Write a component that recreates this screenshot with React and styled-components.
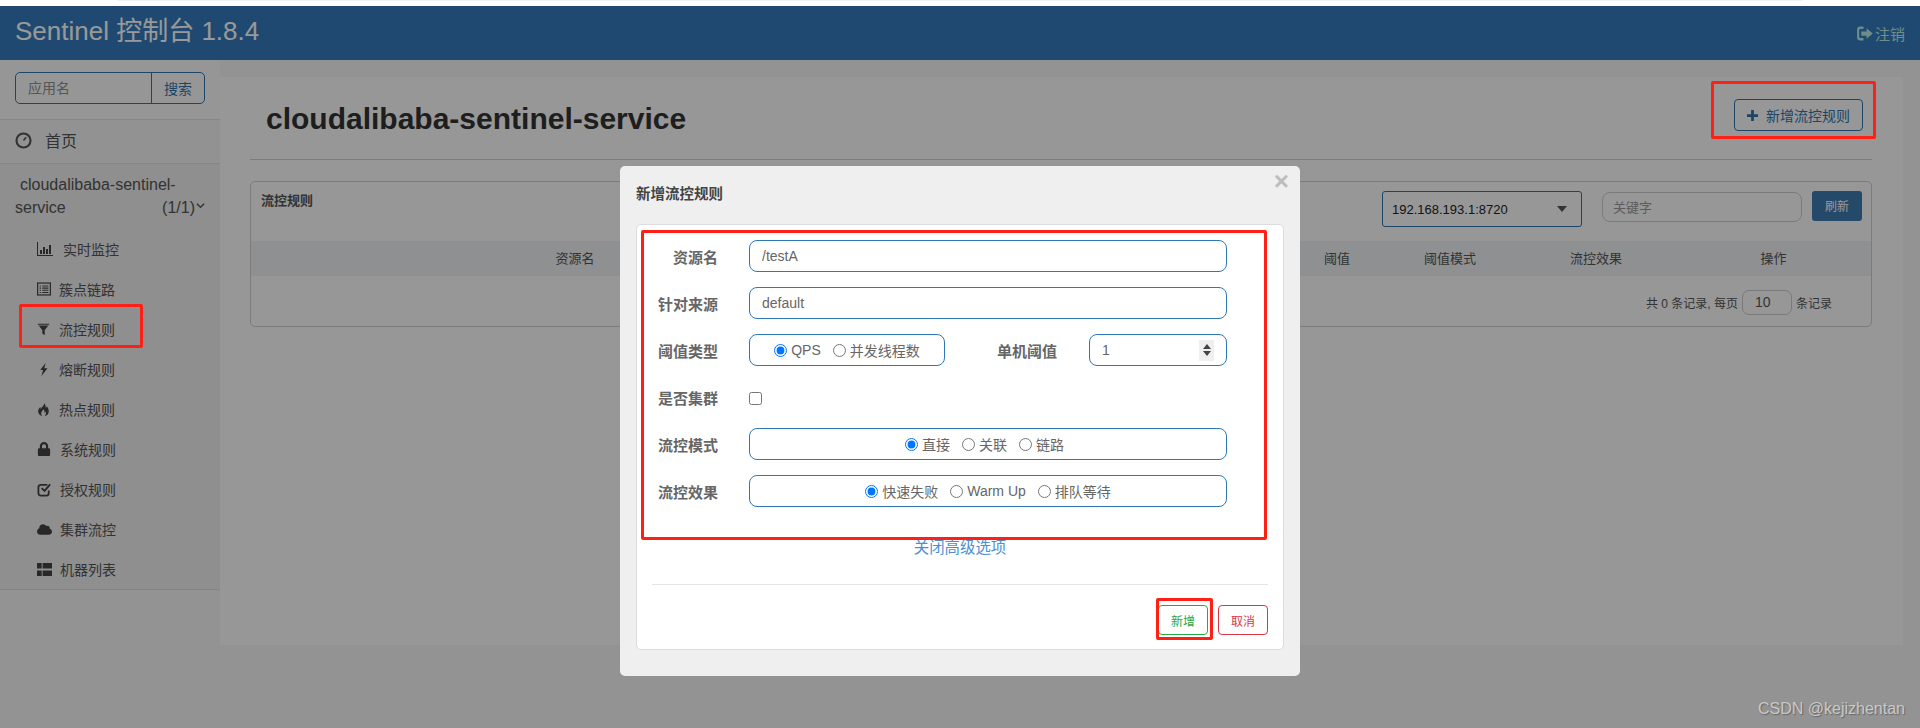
import React from 'react';
import styled, { createGlobalStyle } from 'styled-components';
import { FaBolt, FaLock, FaCloud } from 'react-icons/fa';

const Global = createGlobalStyle`
  html, body { margin: 0; padding: 0; background: #fff; }
  body { font-family: "Liberation Sans", Arial, "Noto Sans CJK SC", sans-serif; font-size: 14px; color: #333; }
  * { box-sizing: border-box; }
  input { font-family: inherit; }
`;

const Strip = styled.div`height: 6px; background: #fff; padding: 0 118px;`;
const StripLine = styled.div`height: 1px; background: #f1f1f1;`;
const Frame = styled.div`position: relative; height: 722px; overflow: hidden; background: #f5f5f5; display: flex; flex-direction: column;`;
const Navbar = styled.header`height: 54px; flex: none; background: #347bbb; display: flex; align-items: center; justify-content: space-between; padding: 0 15px;`;
const Brand = styled.div`font-size: 26px; color: #fff; line-height: 50px; margin-bottom: 4px;`;
const Logout = styled.div`display: flex; align-items: center; gap: 2px; font-size: 15px; color: #b8eae6; svg { width: 17px; height: 17px; }`;
const Body = styled.div`flex: 1; display: flex; align-items: flex-start; min-height: 0;`;

const Sidebar = styled.aside`width: 220px; flex: none; background: #fafafa;`;
const SearchWrap = styled.div`padding: 12px 15px 15px; border-bottom: 1px solid #e2e2e2; background: #fbfbfb;`;
const SearchGroup = styled.div`height: 32px; display: flex; border: 1px solid #2f74ac; border-radius: 5px; overflow: hidden; background: #fbfbfb;`;
const SearchInput = styled.input`flex: 1; min-width: 0; height: 100%; border: 0; outline: 0; background: transparent; padding: 0 12px; font-size: 14px; &::placeholder { color: #8f8f8f; opacity: 1; }`;
const SearchBtn = styled.div`width: 53px; flex: none; border-left: 1px solid #2f74ac; display: flex; align-items: center; justify-content: center; color: #2f74ac; font-size: 14px;`;
const HomeRow = styled.div`height: 44px; display: flex; align-items: center; gap: 13px; padding: 0 0 3px 15px; border-bottom: 1px solid #dedede; background: #f3f3f3; font-size: 16px; color: #555; svg { width: 17px; height: 17px; }`;
const Project = styled.div`background: #eeeeee; border-bottom: 1px solid #dcdcdc; padding-top: 9px;`;
const ProjectName = styled.div`font-size: 16px; line-height: 23px; color: #555; padding: 0 15px 0 15px; `;
const ProjectFirst = styled.div`padding-left: 5px;`;
const ProjectSecond = styled.div`display: flex; justify-content: space-between; align-items: center;`;
const ProjectCount = styled.span`display: inline-flex; align-items: center; gap: 1px; svg { width: 9px; height: 9px; margin-bottom: 5px; }`;
const Menu = styled.ul`list-style: none; margin: 0; padding: 10px 0 0;`;
const MenuItem = styled.li`height: 40px; display: flex; align-items: center; padding-left: 37px; color: #555; font-size: 14px; svg { width: ${p => p.$size || 14}px; height: ${p => p.$size || 14}px; flex: none; color: #444; }`;
const MenuText = styled.span`margin-left: ${p => p.$gap || 9}px;`;

const Main = styled.main`flex: 1; padding: 17px 17px 0 0; min-width: 0;`;
const Panel = styled.section`height: 568px; background: #fcfcfc; padding: 0 31px 0 30px;`;
const PageHead = styled.div`height: 83px; border-bottom: 1px solid #cfcfcf; display: flex; justify-content: space-between; align-items: flex-start; padding: 22px 9px 0 16px;`;
const PageTitle = styled.h1`margin: 0; font-size: 30px; line-height: 40px; font-weight: 700; color: #333;`;
const AddBtn = styled.div`width: 129px; height: 32px; border: 1px solid #2f74ac; border-radius: 4px; display: flex; align-items: center; justify-content: center; gap: 8px; color: #2f74ac; font-size: 14px; svg { width: 11px; height: 11px; }`;
const Card = styled.section`margin-top: 21px; border: 1px solid #cfcfcf; border-radius: 5px; height: 146px;`;
const CardHead = styled.div`height: 59px; display: flex; justify-content: space-between; align-items: flex-start; padding: 9px 9px 0 10px;`;
const CardTitle = styled.div`font-size: 13px; font-weight: 700; color: #555; line-height: 20px;`;
const Controls = styled.div`display: flex; align-items: flex-start;`;
const SelectBox = styled.div`width: 200px; height: 36px; border: 1px solid #2f74ac; border-radius: 3px; display: flex; align-items: center; justify-content: space-between; padding: 0 14px 0 9px; font-size: 13px; color: #222;`;
const Caret = styled.span`width: 0; height: 0; border-left: 5px solid transparent; border-right: 5px solid transparent; border-top: 6px solid #555;`;
const KeywordInput = styled.input`width: 200px; height: 30px; margin: 1px 10px 0 20px; border: 1px solid #cdcdcd; border-radius: 8px; outline: 0; background: transparent; padding: 0 10px; font-size: 13px; &::placeholder { color: #999; opacity: 1; }`;
const RefreshBtn = styled.div`width: 50px; height: 30px; background: #3d7ab0; border-radius: 3px; color: #fff; font-size: 12px; display: flex; align-items: center; justify-content: center; padding-bottom: 2px;`;
const TableHead = styled.div`height: 35px; background: #eef0f3; display: grid; grid-template-columns: 648px 391px 94px 132px 160px 1fr; align-items: center; font-size: 13px; color: #555; text-align: center; padding-bottom: 3px;`;
const Pager = styled.div`height: 49px; display: flex; align-items: center; justify-content: flex-end; padding: 3px 39px 0 0; font-size: 12px; color: #555;`;
const PagerInput = styled.input`width: 50px; height: 25px; margin: 0 4px 0 4px; border: 1px solid #ccc; border-radius: 7px; outline: 0; background: transparent; padding: 0 0 0 12px; font-size: 14px; color: #555;`;

const Backdrop = styled.div`position: absolute; inset: 0; background: rgba(0,0,0,.4);`;
const Modal = styled.div`position: absolute; left: 620px; top: 160px; width: 680px; height: 510px; background: #efefef; border-radius: 5px; padding: 0 16px;`;
const ModalHead = styled.div`height: 58px; display: flex; align-items: center; justify-content: space-between; padding: 0 1px 6px 0; position: relative;`;
const ModalTitle = styled.div`font-size: 14.5px; font-weight: 700; color: #444;`;
const Close = styled.div`position: absolute; right: -5px; top: 2px; font-size: 26px; font-weight: 700; color: #bdbdbd; line-height: 26px;`;
const ModalBody = styled.div`background: #fff; border: 1px solid #ddd; border-radius: 5px; height: 426px; padding-top: 15px;`;
const FormRow = styled.div`display: flex; align-items: center; height: 32px; margin-bottom: 15px;`;
const Label = styled.label`width: 81px; flex: none; margin-right: 31px; text-align: right; font-size: 15px; font-weight: 700; color: #666;`;
const InlineLabel = styled(Label)`width: 62px; margin-left: 50px; margin-right: 32px;`;
const TextBox = styled.input`width: 478px; height: 32px; border: 1px solid #2f78b8; border-radius: 8px; outline: 0; padding: 0 12px; font-size: 14px; color: #666; background: #fff;`;
const RadioBox = styled.div`width: ${p => p.$w || 478}px; height: 32px; border: 1px solid #2f78b8; border-radius: 8px; display: flex; align-items: center; justify-content: center; gap: 12px; padding-right: ${p => p.$shift || 0}px; font-size: 14px; color: #666;`;
const RadioLabel = styled.span`display: inline-flex; align-items: center; gap: 4px;`;
const Radio = styled.input.attrs({ type: 'radio' })`width: 13px; height: 13px; margin: 0;`;
const Check = styled.input.attrs({ type: 'checkbox' })`width: 13px; height: 13px; margin: 2px 0 0;`;
const NumberBox = styled.div`width: 138px; height: 32px; border: 1px solid #2f78b8; border-radius: 8px; display: flex; align-items: center; justify-content: space-between; padding: 0 12px; font-size: 14px; color: #666;`;
const Spinner = styled.span`width: 15px; height: 21px; background: #efefef; display: flex; flex-direction: column; align-items: center; justify-content: center; gap: 2px;`;
const SpinUp = styled.i`width: 0; height: 0; border-left: 4px solid transparent; border-right: 4px solid transparent; border-bottom: 5px solid #444;`;
const SpinDown = styled.i`width: 0; height: 0; border-left: 4px solid transparent; border-right: 4px solid transparent; border-top: 5px solid #444;`;
const AdvLink = styled.div`margin-top: 30px; height: 22px; line-height: 22px; text-align: center; font-size: 15.400px; color: #4b8fd3;`;
const Divider = styled.div`margin: 25px 15px 0; height: 1px; background: #e4e4e4;`;
const Footer = styled.div`display: flex; justify-content: flex-end; gap: 10px; padding: 20px 15px 0;`;
const FootBtn = styled.div`width: 50px; height: 30px; border: 1px solid ${p => p.$c}; color: ${p => p.$c}; border-radius: 4px; background: #fff; font-size: 12px; display: flex; align-items: center; justify-content: center;`;

const Mark = styled.div`position: absolute; left: ${p => p.$x}px; top: ${p => p.$y - 6}px; width: ${p => p.$w}px; height: ${p => p.$h}px; border: 3px solid #ff2015; border-radius: 2px; pointer-events: none;`;
const Watermark = styled.div`position: absolute; right: 15px; bottom: 10px; font-size: 16px; color: #c9c9c9; text-shadow: 1px 1px 1px #666;`;

const IconDash = () => (
  <svg viewBox="0 0 16 16" fill="none" stroke="currentColor"><circle cx="8" cy="8" r="6.6" strokeWidth="2" /><path d="M8 8 10.500 5M4.500 6h.01M8 4.200h.01M4.400 9h.01M11.600 9h.01" strokeWidth="1.500" /></svg>
);
const IconStats = () => (
  <svg viewBox="0 0 16 16" fill="currentColor"><path d="M0 1h1v13h15v1H0z" /><path d="M3 9h2v4H3zM6 6h2v7H6zM9 8h2v5H9zM12 4h2v9h-2z" /></svg>
);
const IconList = () => (
  <svg viewBox="0 0 16 16" fill="none" stroke="currentColor"><rect x=".7" y="1.200" width="14.600" height="13.600" strokeWidth="1.400" /><path d="M3 4.500h1.500M6 4.500h7M3 7h1.500M6 7h7M3 9.500h1.500M6 9.500h7M3 12h1.500M6 12h7" strokeWidth="1.200" /></svg>
);
const IconFilter = () => (
  <svg viewBox="0 0 16 16" fill="currentColor"><path d="M1 1h14v1H1zM2 3h12L9.500 8.500V15l-3-2V8.500z" /></svg>
);
const IconBolt = () => (
  <svg viewBox="0 0 12 16" fill="currentColor"><path d="M8.500 0 2 8.500h3.500L3.500 16 11 6.500H7z" /></svg>
);
const IconFire = () => (
  <svg viewBox="0 0 16 16" fill="currentColor"><path d="M8.500 0c1 3-2.500 4.500-4 7.500C4 6.500 4.500 5.500 4 5 2 7 1 9 1.500 11.500 2 14 4 15.500 6.500 16 5 14.500 4.500 12.500 6 10.500c.8-1 1.500-2 1.500-3 1.500 1.500 2 3 1.500 4.500.8-.3 1.300-1 1.500-2 .8 1.500.8 3.500-1 6 3-.5 5-3 5-6 0-2.500-1.200-4.500-2.500-6-.2 1-.6 1.700-1.200 2.200C10.800 4.500 10.500 2 8.500 0z" /></svg>
);
const IconCheck = () => (
  <svg viewBox="0 0 16 16" fill="none" stroke="currentColor"><path d="M12.500 9v3a2.500 2.500 0 0 1-2.500 2.500H4A2.500 2.500 0 0 1 1.500 12V5.500A2.500 2.500 0 0 1 4 3h7" strokeWidth="1.900" /><path d="m5 6.500 3 3 6-7" strokeWidth="2" /></svg>
);
const IconGrid = () => (
  <svg viewBox="0 0 16 16" fill="currentColor"><path d="M0 1h5v6H0zM6 1h10v6H6zM0 9h5v6H0zM6 9h10v6H6z" /></svg>
);
const IconPlus = () => (
  <svg viewBox="0 0 12 12" fill="currentColor"><path d="M4.500 0h3v4.500H12v3H7.500V12h-3V7.500H0v-3h4.500z" /></svg>
);
const IconLogout = () => (
  <svg viewBox="0 0 16 16" fill="currentColor"><path d="M7 1.500H4a3 3 0 0 0-3 3v7a3 3 0 0 0 3 3h3v-2.200H4a1 1 0 0 1-1-1V4.700a1 1 0 0 1 1-1h3z" /><path d="M10 3 15.800 8 10 13v-3H5V6h5z" /></svg>
);
const IconChevron = () => (
  <svg viewBox="0 0 10 10" fill="none" stroke="currentColor" strokeWidth="1.500"><path d="m1 3 4 4 4-4" /></svg>
);

const menu = [
  [IconStats, '实时监控', 10, 16],
  [IconList, '簇点链路', 8, 14],
  [IconFilter, '流控规则', 9, 13],
  [IconBolt, '熔断规则', 9, 13],
  [IconFire, '热点规则', 9, 13],
  [FaLock, '系统规则', 9, 14],
  [IconCheck, '授权规则', 8, 15],
  [FaCloud, '集群流控', 8, 15],
  [IconGrid, '机器列表', 8, 15],
];

export default function App() {
  return (
    <>
      <Global />
      <Strip><StripLine /></Strip>
      <Frame>
        <Navbar>
          <Brand>Sentinel 控制台 1.8.4</Brand>
          <Logout><IconLogout />注销</Logout>
        </Navbar>
        <Body>
          <Sidebar>
            <SearchWrap>
              <SearchGroup>
                <SearchInput placeholder="应用名" />
                <SearchBtn>搜索</SearchBtn>
              </SearchGroup>
            </SearchWrap>
            <HomeRow><IconDash />首页</HomeRow>
            <Project>
              <ProjectName>
                <ProjectFirst>cloudalibaba-sentinel-</ProjectFirst>
                <ProjectSecond>
                  <span>service</span>
                  <ProjectCount>(1/1)<IconChevron /></ProjectCount>
                </ProjectSecond>
              </ProjectName>
              <Menu>
                {menu.map(([Icon, text, gap, size]) => (
                  <MenuItem key={text} $size={size}><Icon /><MenuText $gap={gap}>{text}</MenuText></MenuItem>
                ))}
              </Menu>
            </Project>
          </Sidebar>
          <Main>
            <Panel>
              <PageHead>
                <PageTitle>cloudalibaba-sentinel-service</PageTitle>
                <AddBtn><IconPlus />新增流控规则</AddBtn>
              </PageHead>
              <Card>
                <CardHead>
                  <CardTitle>流控规则</CardTitle>
                  <Controls>
                    <SelectBox>192.168.193.1:8720<Caret /></SelectBox>
                    <KeywordInput placeholder="关键字" />
                    <RefreshBtn>刷新</RefreshBtn>
                  </Controls>
                </CardHead>
                <TableHead>
                  <span>资源名</span>
                  <span />
                  <span>阈值</span>
                  <span>阈值模式</span>
                  <span>流控效果</span>
                  <span>操作</span>
                </TableHead>
                <Pager>
                  共 0 条记录, 每页<PagerInput readOnly value="10" />条记录
                </Pager>
              </Card>
            </Panel>
          </Main>
        </Body>
        <Backdrop />
        <Modal>
          <ModalHead>
            <ModalTitle>新增流控规则</ModalTitle>
            <Close>×</Close>
          </ModalHead>
          <ModalBody>
            <FormRow>
              <Label>资源名</Label>
              <TextBox readOnly value="/testA" />
            </FormRow>
            <FormRow>
              <Label>针对来源</Label>
              <TextBox readOnly value="default" />
            </FormRow>
            <FormRow>
              <Label>阈值类型</Label>
              <RadioBox $w={196}>
                <RadioLabel><Radio name="grade" defaultChecked />QPS</RadioLabel>
                <RadioLabel><Radio name="grade" />并发线程数</RadioLabel>
              </RadioBox>
              <InlineLabel>单机阈值</InlineLabel>
              <NumberBox>1<Spinner><SpinUp /><SpinDown /></Spinner></NumberBox>
            </FormRow>
            <FormRow>
              <Label>是否集群</Label>
              <Check />
            </FormRow>
            <FormRow>
              <Label>流控模式</Label>
              <RadioBox $shift={7}>
                <RadioLabel><Radio name="mode" defaultChecked />直接</RadioLabel>
                <RadioLabel><Radio name="mode" />关联</RadioLabel>
                <RadioLabel><Radio name="mode" />链路</RadioLabel>
              </RadioBox>
            </FormRow>
            <FormRow>
              <Label>流控效果</Label>
              <RadioBox>
                <RadioLabel><Radio name="effect" defaultChecked />快速失败</RadioLabel>
                <RadioLabel><Radio name="effect" />Warm Up</RadioLabel>
                <RadioLabel><Radio name="effect" />排队等待</RadioLabel>
              </RadioBox>
            </FormRow>
            <AdvLink>关闭高级选项</AdvLink>
            <Divider />
            <Footer>
              <FootBtn $c="#28a745">新增</FootBtn>
              <FootBtn $c="#dc3545">取消</FootBtn>
            </Footer>
          </ModalBody>
        </Modal>
        <Mark $x={19} $y={304} $w={124} $h={44} />
        <Mark $x={1711} $y={81} $w={165} $h={58} />
        <Mark $x={641} $y={230} $w={626} $h={310} />
        <Mark $x={1156} $y={598} $w={57} $h={42} />
        <Watermark>CSDN @kejizhentan</Watermark>
      </Frame>
    </>
  );
}
